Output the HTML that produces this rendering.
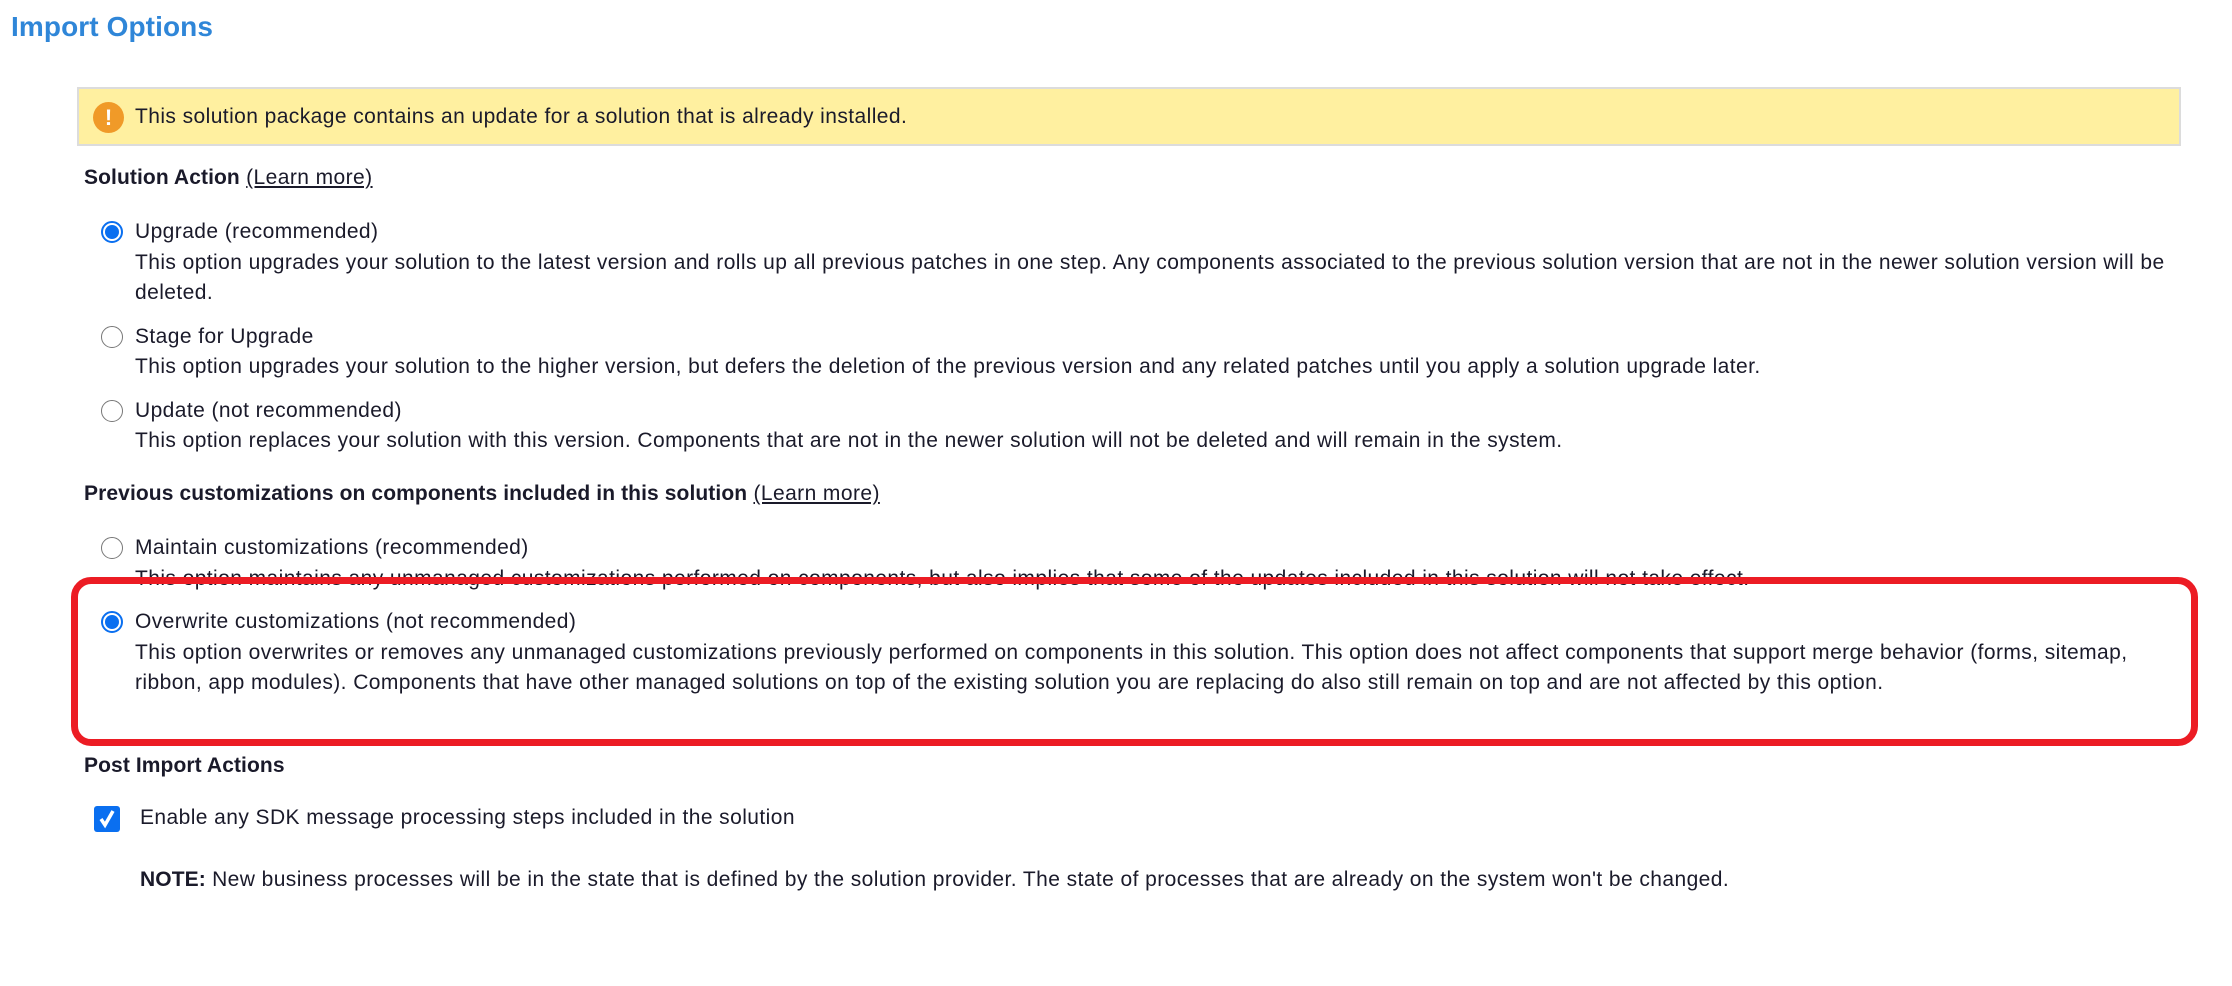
<!DOCTYPE html>
<html><head><meta charset="utf-8"><style>
html,body{margin:0;padding:0;background:#fff;width:2232px;height:986px;overflow:hidden;position:relative;font-family:"Liberation Sans",sans-serif;color:#1a1a2a}
.t{position:absolute;white-space:nowrap;font-size:21px;line-height:30px;letter-spacing:0.42px}
.b{font-weight:bold;letter-spacing:0.1px}
.radio{position:absolute;width:22px;height:22px;border:1.5px solid #777;border-radius:50%;background:#fff;box-sizing:border-box}
.radio.on{border:2px solid #0a6ff0}
.radio.on::after{content:"";position:absolute;left:2px;top:2px;width:14px;height:14px;border-radius:50%;background:#0a6ff0}
u{text-decoration:underline}
</style></head><body>
<div class="t b" style="left:11px;top:12px;font-size:28px;line-height:30px;color:#2f86d8">Import Options</div>

<div style="position:absolute;left:77px;top:87px;width:2104px;height:59px;background:#fff0a0;border:2px solid #dcdcdc;box-sizing:border-box"></div>
<div style="position:absolute;left:93px;top:102px;width:31px;height:31px;border-radius:50%;background:#f09a28;color:#fff;font:bold 22px/31px 'Liberation Sans',sans-serif;text-align:center">!</div>
<div class="t" style="left:135px;top:102px">This solution package contains an update for a solution that is already installed.</div>

<div class="t" style="left:84px;top:163px"><span class="b">Solution Action</span> <u>(Learn more)</u></div>

<div class="radio on" style="left:101px;top:221px"></div>
<div class="t" style="left:135px;top:217px">Upgrade (recommended)</div>
<div class="t" style="left:135px;top:248px">This option upgrades your solution to the latest version and rolls up all previous patches in one step. Any components associated to the previous solution version that are not in the newer solution version will be</div>
<div class="t" style="left:135px;top:278px">deleted.</div>

<div class="radio" style="left:101px;top:326px"></div>
<div class="t" style="left:135px;top:322px">Stage for Upgrade</div>
<div class="t" style="left:135px;top:352px">This option upgrades your solution to the higher version, but defers the deletion of the previous version and any related patches until you apply a solution upgrade later.</div>

<div class="radio" style="left:101px;top:400px"></div>
<div class="t" style="left:135px;top:396px">Update (not recommended)</div>
<div class="t" style="left:135px;top:426px">This option replaces your solution with this version. Components that are not in the newer solution will not be deleted and will remain in the system.</div>

<div class="t" style="left:84px;top:479px"><span class="b">Previous customizations on components included in this solution</span> <u>(Learn more)</u></div>

<div class="radio" style="left:101px;top:537px"></div>
<div class="t" style="left:135px;top:533px">Maintain customizations (recommended)</div>
<div class="t" style="left:135px;top:564px">This option maintains any unmanaged customizations performed on components, but also implies that some of the updates included in this solution will not take effect.</div>

<div style="position:absolute;left:71px;top:577px;width:2127px;height:169px;border:7px solid #ec1c24;border-radius:20px;box-sizing:border-box"></div>

<div class="radio on" style="left:101px;top:611px"></div>
<div class="t" style="left:135px;top:607px">Overwrite customizations (not recommended)</div>
<div class="t" style="left:135px;top:638px">This option overwrites or removes any unmanaged customizations previously performed on components in this solution. This option does not affect components that support merge behavior (forms, sitemap,</div>
<div class="t" style="left:135px;top:668px">ribbon, app modules). Components that have other managed solutions on top of the existing solution you are replacing do also still remain on top and are not affected by this option.</div>

<div class="t b" style="left:84px;top:751px">Post Import Actions</div>

<div style="position:absolute;left:94px;top:806px;width:26px;height:26px;border-radius:3px;background:#0a6ff0"><svg width="26" height="26" viewBox="0 0 26 26"><path d="M7 13 L11 19 L19 5" stroke="#fff" stroke-width="3.5" fill="none"/></svg></div>
<div class="t" style="left:140px;top:803px">Enable any SDK message processing steps included in the solution</div>

<div class="t" style="left:140px;top:865px"><span class="b">NOTE:</span> New business processes will be in the state that is defined by the solution provider. The state of processes that are already on the system won't be changed.</div>
</body></html>
